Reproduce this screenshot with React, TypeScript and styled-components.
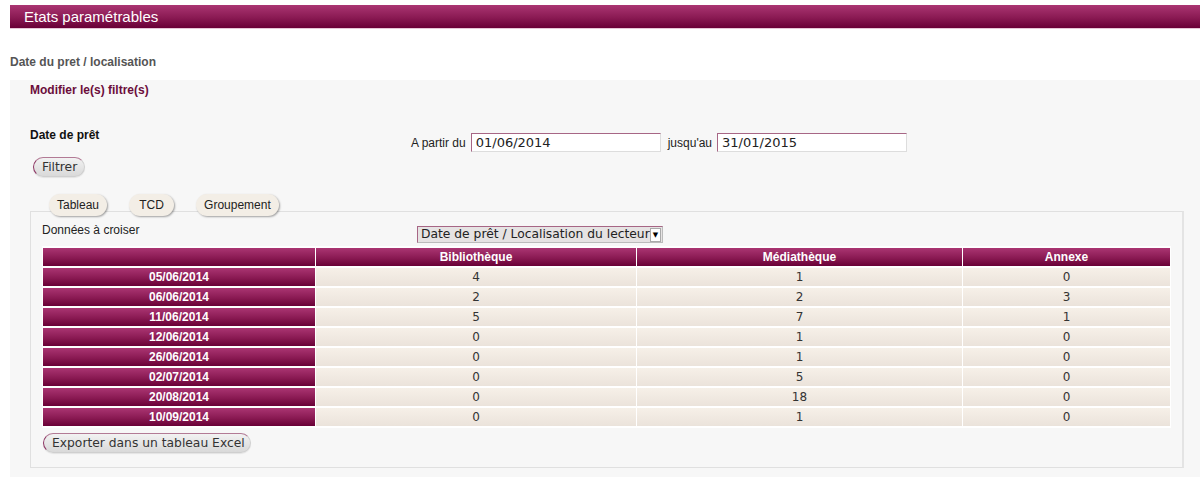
import React from "react";
import styled, {createGlobalStyle} from "styled-components";

const GlobalStyle = createGlobalStyle`
  html, body {
    margin: 0;
    padding: 0;
    background: #fff;
    font-family: "Liberation Sans", Arial, sans-serif;
    color: #222;
  }
`

const Page = styled.div`
  padding: 5px 0 0 10px;
  width: 1190px;
  height: 472px;
  overflow: hidden;
`

const TitleBar = styled.div`
  height: 23px;
  background: linear-gradient(to bottom, #aa3572 0%, #8a1a53 55%, #690036 100%);
  border-bottom: 1px solid #e6c6d6;
  color: #fff;
  font-size: 15px;
  line-height: 23px;
  padding-left: 14px;
`

const Crumb = styled.div`
  margin-top: 27px;
  font-size: 12px;
  font-weight: bold;
  color: #555;
  line-height: 13px;
`

const Panel = styled.div`
  margin-top: 11px;
  background: #f7f7f7;
  padding: 4px 16px 12px 20px;
`

const PanelTitle = styled.div`
  font-size: 12px;
  font-weight: bold;
  color: #6b0d3b;
  line-height: 13px;
`

const FilterRow = styled.div`
  display: flex;
  align-items: flex-start;
  margin-top: 32px;
`

const FilterLabel = styled.div`
  width: 381px;
  font-size: 12px;
  font-weight: bold;
  color: #111;
  line-height: 13px;
`

const DateFields = styled.div`
  display: flex;
  align-items: center;
  margin-top: 4px;
  font-size: 12px;
  color: #222;
`

const FieldLabel = styled.span`
  margin-right: 5px;
`

const DateInput = styled.input`
  box-sizing: border-box;
  width: 190px;
  height: 19px;
  padding: 0 4px;
  margin: 0 7px 0 0;
  border: 1px solid;
  border-color: #a76685 #ddd #ddd #a76685;
  background: #fff;
  font-family: "DejaVu Sans", sans-serif;
  font-size: 13px;
  color: #222;
  outline: none;
`

const PillButton = styled.button`
  display: block;
  box-sizing: border-box;
  height: 20px;
  padding: 0 6px 0 7px;
  border: 1px solid #cfcfcf;
  border-left-color: #8c3462;
  border-top-color: #b27a95;
  border-radius: 10px;
  background: linear-gradient(to bottom, #f2f2f2, #d9d9d9);
  box-shadow: 0 1px 1px rgba(0, 0, 0, 0.08);
  font-family: "DejaVu Sans", sans-serif;
  font-size: 12.3px;
  color: #333;
  line-height: 18px;
  cursor: pointer;
`

const FilterButton = styled(PillButton)`
  margin: 5px 0 0 3px;
  padding: 0 7px 0 8px;
`

const Tabs = styled.div`
  position: relative;
  z-index: 1;
  display: flex;
  gap: 22px;
  margin-top: 17px;
  padding-left: 19px;
`

const Tab = styled.div`
  box-sizing: border-box;
  min-width: 45px;
  height: 22px;
  padding: 0 8px;
  border-radius: 11px;
  background: #f3eee6;
  box-shadow: 1px 1px 2px rgba(0, 0, 0, 0.35);
  font-size: 12px;
  line-height: 22px;
  text-align: center;
  color: #222;
`

const Inner = styled.div`
  margin-top: -5px;
  width: 1154px;
  border: 1px solid #e0e0e0;
  border-right: 2px solid #e4e4e4;
  background: #f7f7f7;
  padding: 11px 0 14px 11px;
  box-sizing: border-box;
`

const CrossRow = styled.div`
  display: flex;
  align-items: flex-start;
  font-size: 12px;
  color: #222;
`

const CrossLabel = styled.div`
  width: 375px;
  line-height: 14px;
`

const Select = styled.div`
  display: flex;
  align-items: center;
  margin-top: 3px;
  width: 246px;
  height: 17px;
  box-sizing: border-box;
  border: 1px solid;
  border-color: #a76685 #bbb #bbb #a76685;
  background: #e6e3e3;
  font-family: "DejaVu Sans", sans-serif;
  font-size: 12.3px;
  color: #222;
  overflow: hidden;
`

const SelectText = styled.span`
  flex: 1;
  min-width: 0;
  white-space: nowrap;
  overflow: hidden;
  padding-left: 3px;
  line-height: 15px;
`

const SelectArrow = styled.span`
  flex: none;
  width: 9px;
  height: 12px;
  margin-right: 1px;
  background: #fff;
  border: 1px solid #aaa;
  font-size: 7px;
  line-height: 12px;
  text-align: center;
  color: #000;
`

const Grid = styled.table`
  margin: 3px 0 0 0;
  width: 1129px;
  border-spacing: 1px 2px;
  background: #fff;
  table-layout: fixed;
`

const Col = styled.col<{ $w: number }>`
  width: ${p => p.$w}px;
`

const HeadCell = styled.th`
  height: 18px;
  padding: 0;
  background: linear-gradient(to bottom, #aa3572 0%, #8a1a53 55%, #690036 100%);
  color: #fff;
  font-size: 12px;
  font-weight: bold;
  text-align: center;
  line-height: 18px;
`

const Cell = styled.td`
  height: 18px;
  padding: 0;
  background: linear-gradient(to bottom, #f6f0e8, #ebe3db);
  font-family: "DejaVu Sans", sans-serif;
  font-size: 12px;
  color: #333;
  text-align: center;
  line-height: 18px;
`

const ExportButton = styled(PillButton)`
  margin: 5px 0 0 1px;
  padding: 0 5px 0 8px;
`

const columns = ['', 'Bibliothèque', 'Médiathèque', 'Annexe']

const rows: [string, number, number, number][] = [
    ['05/06/2014', 4, 1, 0],
    ['06/06/2014', 2, 2, 3],
    ['11/06/2014', 5, 7, 1],
    ['12/06/2014', 0, 1, 0],
    ['26/06/2014', 0, 1, 0],
    ['02/07/2014', 0, 5, 0],
    ['20/08/2014', 0, 18, 0],
    ['10/09/2014', 0, 1, 0],
]

const App = () => {
    return (
        <Page>
            <GlobalStyle/>
            <TitleBar>Etats paramétrables</TitleBar>
            <Crumb>Date du pret / localisation</Crumb>
            <Panel>
                <PanelTitle>Modifier le(s) filtre(s)</PanelTitle>
                <FilterRow>
                    <FilterLabel>Date de prêt</FilterLabel>
                    <DateFields>
                        <FieldLabel>A partir du</FieldLabel>
                        <DateInput defaultValue="01/06/2014"/>
                        <FieldLabel>jusqu'au</FieldLabel>
                        <DateInput defaultValue="31/01/2015"/>
                    </DateFields>
                </FilterRow>
                <FilterButton>Filtrer</FilterButton>
                <Tabs>
                    <Tab>Tableau</Tab>
                    <Tab>TCD</Tab>
                    <Tab>Groupement</Tab>
                </Tabs>
                <Inner>
                    <CrossRow>
                        <CrossLabel>Données à croiser</CrossLabel>
                        <Select>
                            <SelectText>Date de prêt / Localisation du lecteur</SelectText>
                            <SelectArrow>▼</SelectArrow>
                        </Select>
                    </CrossRow>
                    <Grid>
                        <colgroup>
                            <Col $w={272}/>
                            <Col $w={320}/>
                            <Col $w={325}/>
                            <Col $w={207}/>
                        </colgroup>
                        <thead>
                        <tr>
                            {columns.map(c => <HeadCell key={c}>{c}</HeadCell>)}
                        </tr>
                        </thead>
                        <tbody>
                        {rows.map(([date, a, b, c]) => (
                            <tr key={date}>
                                <HeadCell>{date}</HeadCell>
                                <Cell>{a}</Cell>
                                <Cell>{b}</Cell>
                                <Cell>{c}</Cell>
                            </tr>
                        ))}
                        </tbody>
                    </Grid>
                    <ExportButton>Exporter dans un tableau Excel</ExportButton>
                </Inner>
            </Panel>
        </Page>
    )
}

export default App
